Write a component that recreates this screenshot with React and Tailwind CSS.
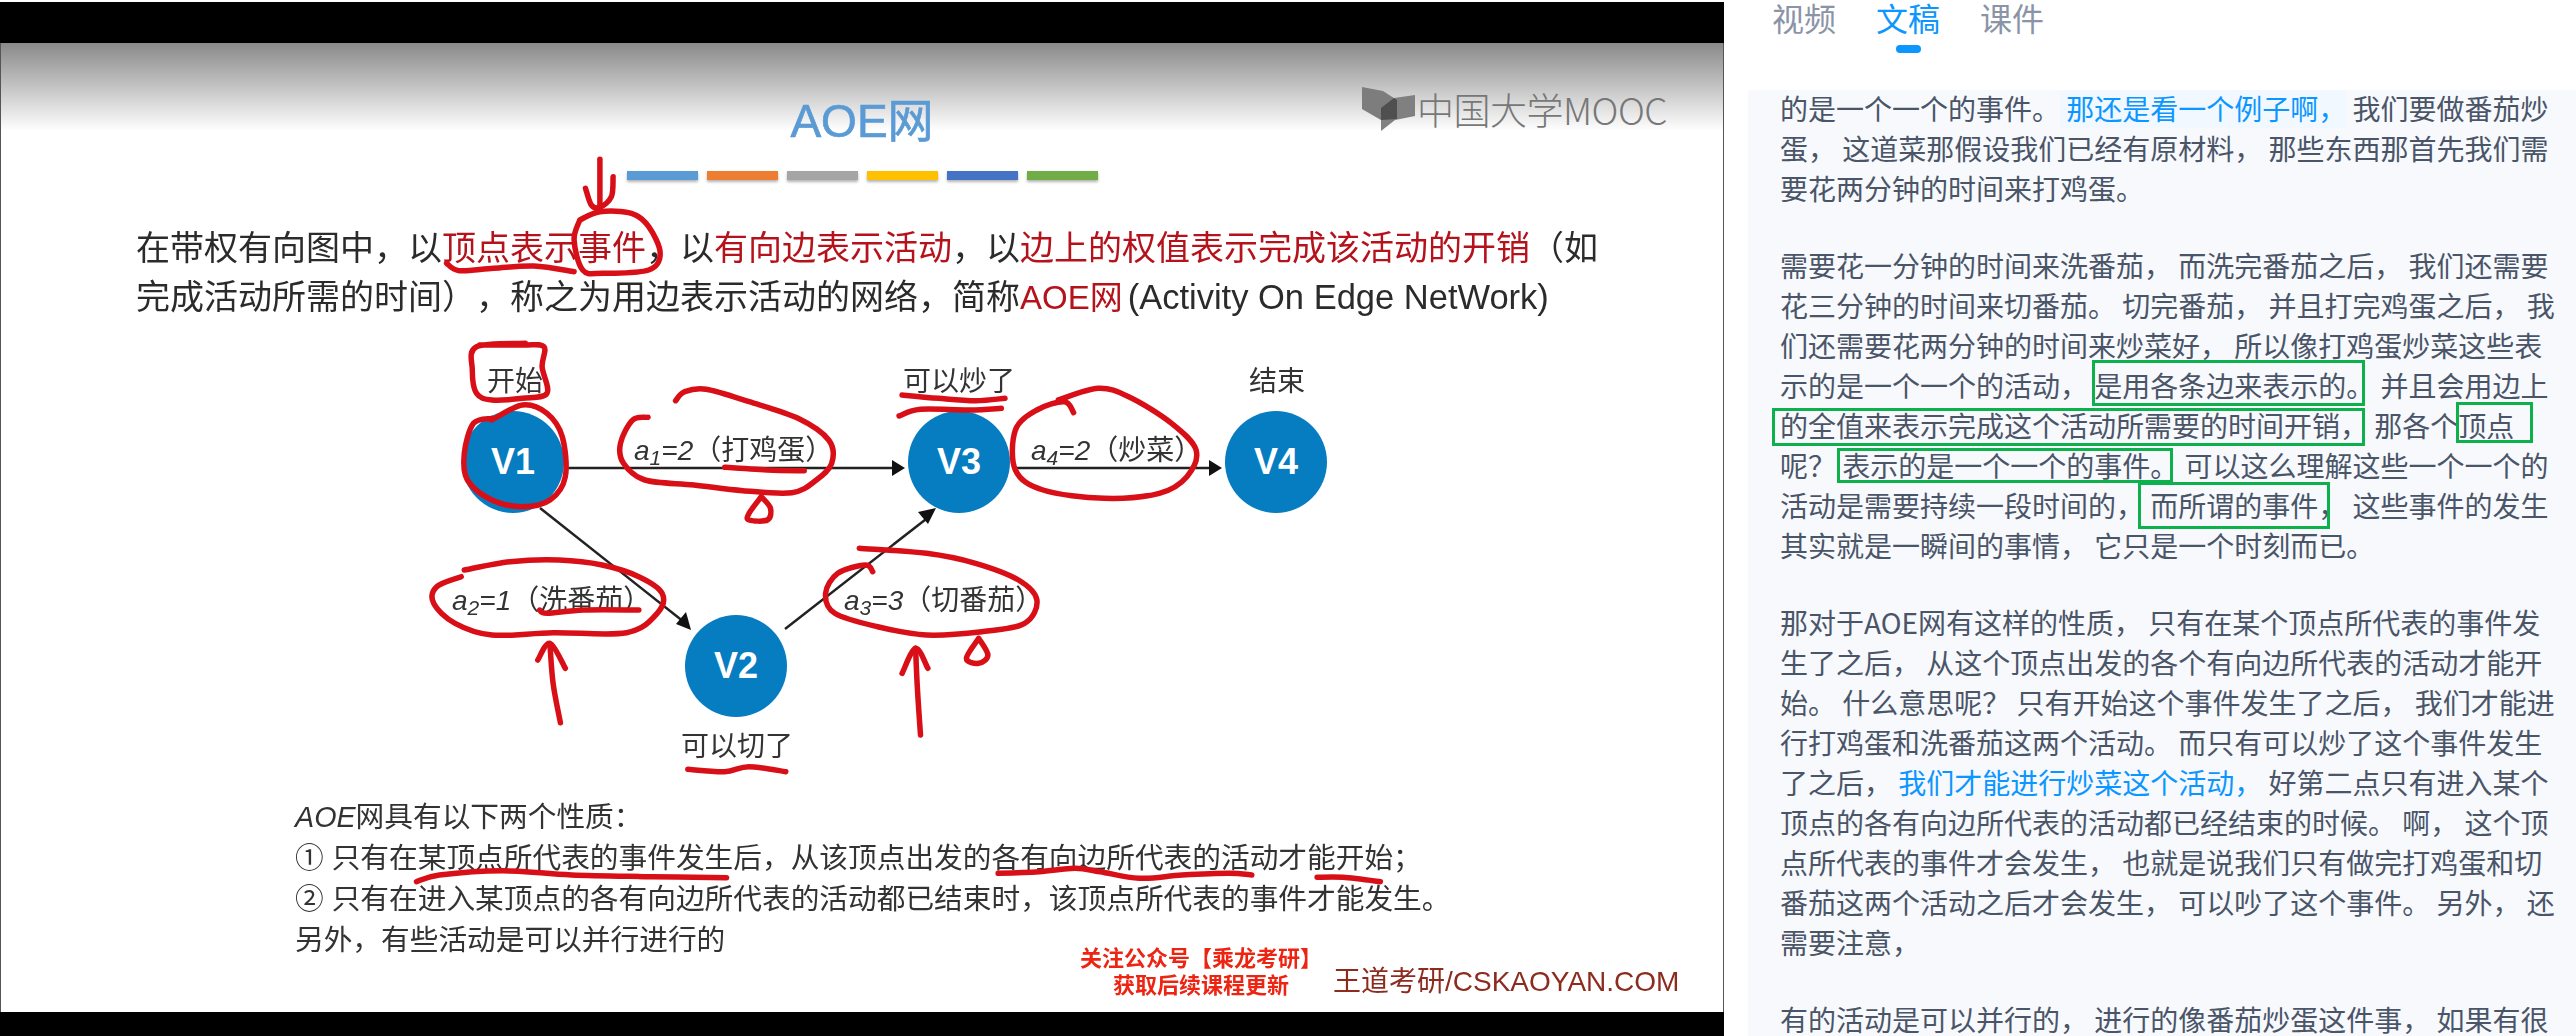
const CJK = "font-['Noto_Sans_CJK_SC',sans-serif]";

const BARS = ["bg-[#5b9bd5]", "bg-[#ed7d31]", "bg-[#a5a5a5]", "bg-[#ffc000]", "bg-[#4472c4]", "bg-[#70ad47]"];

// hand-drawn strokes, traced in crop coordinates
const graph = (pts) => pts.map(([x, y]) => [400 + x / 1.633, 330 + y / 3]);
const top = (pts) => pts.map(([x, y]) => [x / 1.742, y / 3]);
const low = (pts) => pts.map(([x, y]) => [250 + x / 1.742, 780 + y / 3]);
const low2 = (pts) => pts.map(([x, y]) => [950 + x / 2.8, 840 + y / 3]);

const STROKES = [
  top([[1045, 478], [1045, 550], [1045, 622]]),
  top([[1020, 565], [1030, 615], [1045, 622], [1065, 590], [1068, 530]]),
  top([[1010, 660], [1045, 635], [1100, 640], [1130, 680], [1150, 760], [1130, 810], [1050, 820], [1015, 810], [1000, 720], [1010, 660]]),
  top([[778, 790], [800, 812], [860, 805], [930, 798], [1000, 815]]),
  graph([[130, 45], [200, 45], [235, 50], [232, 110], [240, 190], [200, 205], [150, 210], [125, 190], [118, 120], [125, 50], [205, 40]]),
  graph([[150, 270], [200, 225], [240, 250], [265, 320], [270, 440], [245, 510], [200, 530], [150, 510], [110, 450], [105, 370], [120, 280], [150, 265]]),
  graph([[405, 262], [380, 270], [360, 340], [365, 400], [400, 450], [480, 465], [560, 482], [640, 488], [680, 450], [705, 400], [700, 330], [650, 265], [570, 215], [500, 178], [465, 185], [450, 212]]),
  graph([[530, 412], [600, 420], [660, 422]]),
  graph([[590, 500], [570, 550], [570, 570], [600, 570], [605, 535], [590, 500]]),
  graph([[820, 195], [880, 205], [940, 212], [988, 205]]),
  graph([[815, 258], [850, 238], [930, 240], [982, 235]]),
  graph([[1100, 248], [1085, 215], [1040, 240], [1005, 300], [1005, 420], [1050, 480], [1150, 505], [1240, 490], [1285, 440], [1300, 360], [1260, 280], [1190, 200], [1140, 175], [1075, 210]]),
  graph([[100, 740], [60, 770], [55, 820], [90, 880], [150, 915], [250, 908], [370, 908], [420, 850], [428, 790], [390, 740], [330, 705], [260, 690], [180, 695], [105, 720]]),
  graph([[228, 840], [240, 850], [300, 840], [390, 840]]),
  graph([[225, 990], [245, 940], [270, 1015]]),
  graph([[245, 945], [250, 1060], [262, 1178]]),
  graph([[772, 725], [760, 705], [715, 730], [695, 790], [710, 850], [780, 890], [860, 915], [950, 905], [1020, 880], [1040, 810], [1010, 750], [940, 700], [860, 670], [750, 655]]),
  graph([[945, 925], [925, 985], [945, 1000], [960, 975], [945, 925]]),
  graph([[820, 1030], [842, 955], [862, 1015]]),
  graph([[842, 955], [845, 1080], [850, 1215]]),
  graph([[470, 1318], [530, 1325], [570, 1310], [630, 1325]]),
  low([[290, 305], [330, 285], [440, 272], [560, 285], [700, 290], [830, 293]]),
  low2([[135, 100], [250, 95], [350, 85], [420, 95], [530, 115], [650, 105], [780, 100], [845, 105]]),
  low2([[1028, 112], [1100, 112], [1205, 125]]),
];

function smooth(pts) {
  let d = `M${pts[0][0].toFixed(1)} ${pts[0][1].toFixed(1)}`;
  for (let i = 0; i < pts.length - 1; i++) {
    const p0 = pts[i - 1] ?? pts[i];
    const p1 = pts[i];
    const p2 = pts[i + 1];
    const p3 = pts[i + 2] ?? p2;
    const c1x = p1[0] + (p2[0] - p0[0]) / 6;
    const c1y = p1[1] + (p2[1] - p0[1]) / 6;
    const c2x = p2[0] - (p3[0] - p1[0]) / 6;
    const c2y = p2[1] - (p3[1] - p1[1]) / 6;
    d += ` C${c1x.toFixed(1)} ${c1y.toFixed(1)} ${c2x.toFixed(1)} ${c2y.toFixed(1)} ${p2[0].toFixed(1)} ${p2[1].toFixed(1)}`;
  }
  return d;
}

function Overlay() {
  return (
    <svg className="absolute left-0 top-0 z-10 pointer-events-none blur-[0.4px]" width="1724" height="1036" viewBox="0 0 1724 1036" fill="none">
      <g stroke="#222" strokeWidth="2.5">
        <path d="M568 468H895" />
        <path d="M1012 468H1212" />
        <path d="M540 508L684 622" />
        <path d="M785 629L930 516" />
      </g>
      <g fill="#111">
        <path d="M905 468L892 460V476Z" />
        <path d="M1222 468L1209 460V476Z" />
        <path d="M691 630L676 624L686 612Z" />
        <path d="M936 508L928 524L918 512Z" />
      </g>
      <g stroke="#d90f18" strokeWidth="5.5" strokeLinecap="round" strokeLinejoin="round">
        {STROKES.map((pts, i) => (
          <path key={i} d={smooth(pts)} />
        ))}
      </g>
    </svg>
  );
}

function Logo() {
  return (
    <div className="absolute left-[1360px] top-[43px] flex items-center gap-[2px]">
      <svg width="54" height="46" viewBox="0 0 54 46">
        <path d="M1 1L22 5L36 14L22 22L20 34L1 23Z" fill="#7d7d7d" />
        <path d="M20 45V22L33 12L54 9V30L34 34Z" fill="#808080" />
        <path d="M20 34V22L33 12L36 14V33Z" fill="#4f4f4f" />
      </svg>
      <span className={`${CJK} text-[37px] leading-[44px] font-light tracking-[-0.5px] text-[#777]`}>中国大学MOOC</span>
    </div>
  );
}

function Node({ className, children }) {
  return (
    <div className={`absolute flex h-[102px] w-[102px] items-center justify-center rounded-full bg-[#067cc1] text-[36px] font-bold text-white ${className}`}>
      {children}
    </div>
  );
}

function EdgeLabel({ className, name, idx, value, children }) {
  return (
    <div className={`absolute whitespace-nowrap leading-[40px] ${className}`}>
      <i>
        {name}
        <sub>{idx}</sub>={value}
      </i>
      （{children}）
    </div>
  );
}

function Graph() {
  return (
    <div className="relative h-[475px] text-[28px] text-[#333]">
      <div className="absolute left-[514px] top-[40px] -translate-x-1/2 leading-[40px]">开始</div>
      <div className="absolute left-[958px] top-[40px] -translate-x-1/2 leading-[40px]">可以炒了</div>
      <div className="absolute left-[1276px] top-[40px] -translate-x-1/2 leading-[40px]">结束</div>
      <div className="absolute left-[736px] top-[405px] -translate-x-1/2 leading-[40px]">可以切了</div>
      <Node className="left-[461px] top-[89px]">V1</Node>
      <Node className="left-[907px] top-[89px]">V3</Node>
      <Node className="left-[1224px] top-[89px]">V4</Node>
      <Node className="left-[684px] top-[293px]">V2</Node>
      <EdgeLabel className="left-[633px] top-[109px]" name="a" idx="1" value="2">打鸡蛋</EdgeLabel>
      <EdgeLabel className="left-[1030px] top-[109px]" name="a" idx="4" value="2">炒菜</EdgeLabel>
      <EdgeLabel className="left-[451px] top-[259px]" name="a" idx="2" value="1">洗番茄</EdgeLabel>
      <EdgeLabel className="left-[843px] top-[259px]" name="a" idx="3" value="3">切番茄</EdgeLabel>
    </div>
  );
}

function Slide() {
  return (
    <div className="relative flex-1 overflow-hidden border-x border-[#555] bg-[linear-gradient(180deg,#898989_0,#ffffff_88px)] font-['Liberation_Sans','Noto_Sans_CJK_SC',sans-serif]">
      <Logo />
      <div className="blur-[0.4px]">
        <div className="mt-[48px] text-center text-[46px] leading-[60px] text-[#5b9bd5] [-webkit-text-stroke:0.7px_#5b9bd5]">AOE网</div>
        <div className="mt-[20px] flex justify-center gap-[9px]">
          {BARS.map((c) => (
            <div key={c} className={`h-[9px] w-[71px] shadow-[0_2px_3px_rgba(0,0,0,0.3)] ${c}`} />
          ))}
        </div>
        <div className="mt-[44px] whitespace-nowrap pl-[135px] text-[34px] leading-[49px] text-[#2b2b2b]">
          <p>
            在带权有向图中，以<span className="text-[#b5121b]">顶点表示事件</span>，以<span className="text-[#b5121b]">有向边表示活动</span>，以<span className="text-[#b5121b]">边上的权值表示完成该活动的开销</span>（如
          </p>
          <p>
            完成活动所需的时间），称之为用边表示活动的网络，简称<span className="text-[33px] text-[#b5121b]">AOE网</span><span className="ml-[5px] text-[34.5px]">(Activity On Edge NetWork)</span>
          </p>
        </div>
        <Graph />
        <div className="whitespace-nowrap pl-[294px] text-[28.7px] leading-[41px] text-[#333]">
          <p><i>AOE</i>网具有以下两个性质：</p>
          <p>① 只有在某顶点所代表的事件发生后，从该顶点出发的各有向边所代表的活动才能开始；</p>
          <p>② 只有在进入某顶点的各有向边所代表的活动都已结束时，该顶点所代表的事件才能发生。</p>
          <p>另外，有些活动是可以并行进行的</p>
        </div>
      </div>
      <div className="absolute bottom-[13px] left-[1079px] flex items-center gap-[11px] blur-[0.3px]">
        <div className="text-center text-[22px] font-bold leading-[27px] text-[#ee2412]">
          <p>关注公众号【乘龙考研】</p>
          <p>获取后续课程更新</p>
        </div>
        <div className="mt-[20px] whitespace-nowrap text-[28px] leading-[32px] text-[#8c2b1e]">王道考研/CSKAOYAN.COM</div>
      </div>
    </div>
  );
}

function Video() {
  return (
    <div className="relative flex h-[1036px] w-[1724px] shrink-0 flex-col pt-[2px]">
      <div className="h-[41px] bg-black" />
      <Slide />
      <div className="h-[24px] bg-black" />
      <Overlay />
    </div>
  );
}

function Tabs() {
  return (
    <div className="flex h-[90px] gap-[40px] pl-[48px] text-[32px] leading-[34px] text-[#8a94a6]">
      <div>视频</div>
      <div className="flex flex-col items-center text-[#0c96ff]">
        文稿
        <div className="mt-[11px] h-[8px] w-[25px] rounded-full bg-[#0c96ff]" />
      </div>
      <div>课件</div>
    </div>
  );
}

function Blue({ children, hl }) {
  return <span className={`text-[#0c96ff] ${hl ? "bg-[#f2f8ff]" : ""}`}>{children}</span>;
}

// green boxes the editor drew over the transcript
const BOXES = [
  "left-[344px] top-[270px] h-[46px] w-[273px]",
  "left-[24px] top-[318px] h-[38px] w-[593px]",
  "left-[708px] top-[312px] h-[41px] w-[77px]",
  "left-[89px] top-[358px] h-[35px] w-[336px]",
  "left-[390px] top-[392px] h-[47px] w-[192px]",
];

function Transcript() {
  return (
    <div className="relative ml-[24px] h-[946px] overflow-hidden bg-[#f7f9fd] pl-[32px] text-[28px] leading-[40px] text-[#4a5568]">
      <div className="-mt-[2px] flex flex-col gap-[37px] whitespace-nowrap">
        <div>
          <p>的是一个一个的事件。<Blue hl> 那还是看一个例子啊，</Blue> 我们要做番茄炒</p>
          <p>蛋， 这道菜那假设我们已经有原材料， 那些东西那首先我们需</p>
          <p>要花两分钟的时间来打鸡蛋。</p>
        </div>
        <div>
          <p>需要花一分钟的时间来洗番茄， 而洗完番茄之后， 我们还需要</p>
          <p>花三分钟的时间来切番茄。 切完番茄， 并且打完鸡蛋之后， 我</p>
          <p>们还需要花两分钟的时间来炒菜好， 所以像打鸡蛋炒菜这些表</p>
          <p>示的是一个一个的活动， 是用各条边来表示的。 并且会用边上</p>
          <p>的全值来表示完成这个活动所需要的时间开销， 那各个顶点</p>
          <p>呢？ 表示的是一个一个的事件。 可以这么理解这些一个一个的</p>
          <p>活动是需要持续一段时间的， 而所谓的事件， 这些事件的发生</p>
          <p>其实就是一瞬间的事情， 它只是一个时刻而已。</p>
        </div>
        <div>
          <p>那对于AOE网有这样的性质， 只有在某个顶点所代表的事件发</p>
          <p>生了之后， 从这个顶点出发的各个有向边所代表的活动才能开</p>
          <p>始。 什么意思呢？ 只有开始这个事件发生了之后， 我们才能进</p>
          <p>行打鸡蛋和洗番茄这两个活动。 而只有可以炒了这个事件发生</p>
          <p>了之后， <Blue>我们才能进行炒菜这个活动，</Blue> 好第二点只有进入某个</p>
          <p>顶点的各有向边所代表的活动都已经结束的时候。 啊， 这个顶</p>
          <p>点所代表的事件才会发生， 也就是说我们只有做完打鸡蛋和切</p>
          <p>番茄这两个活动之后才会发生， 可以吵了这个事件。 另外， 还</p>
          <p>需要注意，</p>
        </div>
        <div>
          <p>有的活动是可以并行的， 进行的像番茄炒蛋这件事， 如果有很</p>
        </div>
      </div>
      {BOXES.map((b) => (
        <div key={b} className={`absolute border-[3px] border-[#0cb14b] ${b}`} />
      ))}
    </div>
  );
}

export default function App() {
  return (
    <div className={`flex h-[1036px] w-[2576px] overflow-hidden bg-white [text-spacing-trim:space-all] ${CJK}`}>
      <Video />
      <div className="flex-1">
        <Tabs />
        <Transcript />
      </div>
    </div>
  );
}
